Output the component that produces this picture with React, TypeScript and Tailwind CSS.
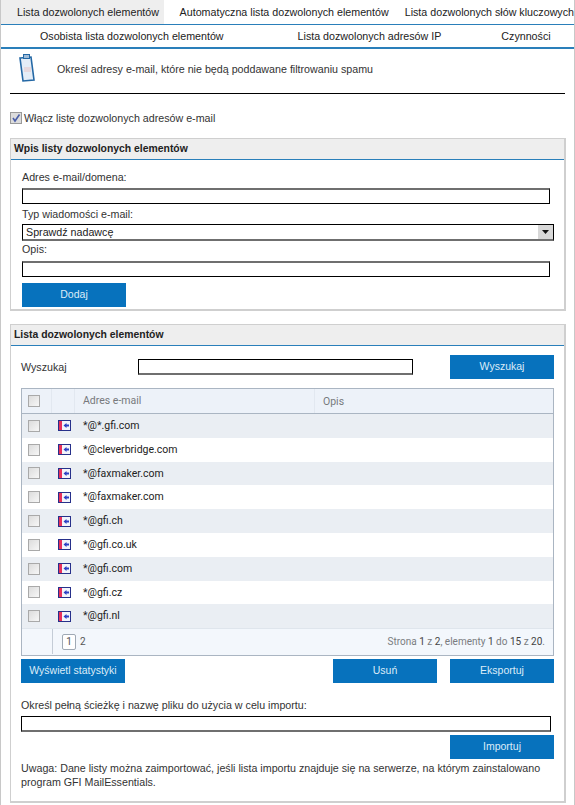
const rows = [
  "*@*.gfi.com",
  "*@cleverbridge.com",
  "*@faxmaker.com",
  "*@faxmaker.com",
  "*@gfi.ch",
  "*@gfi.co.uk",
  "*@gfi.com",
  "*@gfi.cz",
  "*@gfi.nl",
];

function Box() {
  return <span className="block h-[12px] w-[12px] border border-[#a9a9a9] bg-gradient-to-br from-[#dcdcdc] to-[#f7f7f7]" />;
}

function RowIcon() {
  return (
    <svg width="13" height="11" viewBox="0 0 13 11">
      <rect x="0" y="0" width="13" height="11" fill="#27308a" />
      <rect x="1" y="1" width="3" height="9" fill="#e8305c" />
      <rect x="4" y="1" width="8" height="9" fill="#f2f4fb" />
      <path d="M5.5 5.5 L8.5 3 V4.5 H11 V6.5 H8.5 V8 Z" fill="#2b3fc4" />
    </svg>
  );
}

function BlueButton({ label, width }: { label: string; width: string }) {
  return (
    <button className={`h-[24px] ${width} bg-[#0772bd] text-center text-[10.5px] text-[#dcecf8]`}>
      {label}
    </button>
  );
}

function TextBox({ width }: { width: string }) {
  return <div className={`h-[16px] ${width} border border-black border-t-[#6f6f6f] border-t-2 bg-white`} />;
}

function PanelHeader({ title }: { title: string }) {
  return (
    <div className="flex h-[21px] items-center border-b border-[#2a7fba] bg-[#eeeeee] pl-[3px] text-[10.4px] font-bold text-[#222]">
      {title}
    </div>
  );
}

export default function App() {
  return (
    <div className="h-[805px] w-[575px] overflow-hidden border-x border-[#c8c8c8] bg-white font-['Liberation_Sans',Arial,sans-serif] text-[10.7px] text-[#333]">
      {/* Tabs */}
      <div className="flex h-[25px] items-center border-b border-[#2a7fba] text-[#222]">
        <div className="flex h-full w-[163px] items-center whitespace-nowrap bg-[#eeeeee] pl-[16px] pt-[1px]">Lista dozwolonych elementów</div>
        <div className="ml-[16px] whitespace-nowrap pt-[1px]">Automatyczna lista dozwolonych elementów</div>
        <div className="ml-[16px] whitespace-nowrap pt-[1px]">Lista dozwolonych słów kluczowych</div>
      </div>
      <div className="flex h-[24px] items-center border-b-2 border-[#2a7fba] text-[#222]">
        <div className="ml-[39px] whitespace-nowrap">Osobista lista dozwolonych elementów</div>
        <div className="ml-[74px] whitespace-nowrap">Lista dozwolonych adresów IP</div>
        <div className="ml-[60px] whitespace-nowrap">Czynności</div>
      </div>

      {/* Description */}
      <div className="ml-[9px] mr-[9px] flex h-[45px] items-center border-b border-black">
        <svg width="16" height="28" viewBox="0 0 16 28" className="ml-[9px] mt-[-7px]">
          <path d="M1 4 L12 3 L15 26 L4 27 Z" fill="#e4edf7" stroke="#2468a5" strokeWidth="1.6" />
          <rect x="4.5" y="0.5" width="6" height="4" fill="#9fbcd8" stroke="#2468a5" />
          <rect x="5" y="13" width="7" height="5" fill="#e6d9de" />
        </svg>
        <span className="ml-[22px] mt-[-4px] whitespace-nowrap text-[#333]">Określ adresy e-mail, które nie będą poddawane filtrowaniu spamu</span>
      </div>

      {/* Enable */}
      <div className="ml-[9px] mt-[17px] flex h-[14px] items-center">
        <span className="flex h-[12px] w-[12px] items-center justify-center border border-[#9a9a9a] bg-[#dcdcdc]">
          <svg width="10" height="10" viewBox="0 0 10 10">
            <path d="M2 5 L4 8 L8.5 1.5" fill="none" stroke="#4a5ea8" strokeWidth="1.6" />
          </svg>
        </span>
        <span className="ml-[2px]">Włącz listę dozwolonych adresów e-mail</span>
      </div>

      {/* Entry panel */}
      <div className="ml-[9px] mt-[13px] h-[173px] w-[556px] border border-[#cfcfcf] border-b-2 border-r-2 bg-white">
        <PanelHeader title="Wpis listy dozwolonych elementów" />
        <div className="pl-[11px]">
          <div className="mt-[10px] leading-[14px]">Adres e-mail/domena:</div>
          <div className="mt-[4px]"><TextBox width="w-[528px]" /></div>
          <div className="mt-[3px] leading-[14px]">Typ wiadomości e-mail:</div>
          <div className="mt-[3px] flex h-[17px] w-[532px] items-center border border-black border-b-[#6f6f6f] border-b-2 bg-white pl-[3px] text-[#222]">
            Sprawdź nadawcę
            <span className="ml-auto flex h-full w-[15px] items-center justify-center bg-[#d8d8d8]">
              <svg width="7" height="4" viewBox="0 0 7 4"><path d="M0 0 H7 L3.5 4 Z" fill="#111" /></svg>
            </span>
          </div>
          <div className="mt-[1px] leading-[14px]">Opis:</div>
          <div className="mt-[5px]"><TextBox width="w-[528px]" /></div>
          <div className="mt-[6px]"><BlueButton label="Dodaj" width="w-[104px]" /></div>
        </div>
      </div>

      {/* List panel */}
      <div className="ml-[9px] mt-[13px] h-[479px] w-[556px] border border-[#cfcfcf] border-b-2 border-r-2 bg-white">
        <PanelHeader title="Lista dozwolonych elementów" />
        <div className="mt-[9px] flex h-[24px] items-center pl-[10px] pr-[10px]">
          <span className="w-[117px]">Wyszukaj</span>
          <div className="h-[16px] w-[275px] border border-black border-b-[#6f6f6f] border-b-2 bg-white" />
          <div className="ml-auto"><BlueButton label="Wyszukaj" width="w-[104px]" /></div>
        </div>

        <div className="ml-[10px] mt-[9px] w-[533px] border border-[#aab5c2] font-['Roboto',sans-serif] text-[10.5px]">
          <div className="flex h-[25px] items-center border-b border-[#aab5c2] bg-[#edf2f9] text-[#77797c]">
            <div className="flex h-full w-[30px] items-center border-r border-[#e2e8f0] pl-[6px]"><Box /></div>
            <div className="h-full w-[23px] border-r border-[#e2e8f0]" />
            <div className="w-[239px] pl-[8px]">Adres e-mail</div>
            <div className="h-full border-l border-[#e2e8f0] pl-[8px] leading-[25px]">Opis</div>
          </div>
          {rows.map((r, i) => (
            <div key={i} className={`flex h-[23.8px] items-center text-[#222] ${i % 2 === 0 ? "bg-[#eaeef3]" : "bg-white"}`}>
              <div className="flex w-[30px] pl-[6px]"><Box /></div>
              <div className="flex w-[23px] justify-center pl-[2px]"><RowIcon /></div>
              <div className="pl-[8px]">{r}</div>
            </div>
          ))}
          <div className="flex h-[27px] items-center border-t border-[#dfe5ec] bg-[#f3f7fc] pb-[1px] text-[10px] text-[#555]">
            <div className="h-full w-[31px] border-r border-[#c4ccd6]" />
            <div className="ml-[9px] flex h-[16px] w-[14px] items-center justify-center rounded-[2px] border border-[#9fa9b5] bg-white">1</div>
            <span className="ml-[4px]">2</span>
            <span className="ml-auto mr-[8px] text-[#7a7c80]">
              Strona <b className="font-normal text-[#444]">1</b> z <b className="font-normal text-[#444]">2</b>, elementy <b className="font-normal text-[#444]">1</b> do <b className="font-normal text-[#444]">15</b> z <b className="font-normal text-[#444]">20</b>.
            </span>
          </div>
        </div>

        <div className="mt-[3px] flex pl-[10px] pr-[10px]">
          <BlueButton label="Wyświetl statystyki" width="w-[104px]" />
          <div className="ml-auto flex gap-[13px]">
            <BlueButton label="Usuń" width="w-[104px]" />
            <BlueButton label="Eksportuj" width="w-[104px]" />
          </div>
        </div>

        <div className="mt-[15px] pl-[10px] leading-[14px]">Określ pełną ścieżkę i nazwę pliku do użycia w celu importu:</div>
        <div className="ml-[10px] mt-[4px] h-[16px] w-[530px] border border-black border-b-[#6f6f6f] border-b-2 bg-white" />
        <div className="mt-[3px] flex justify-end pr-[10px]"><BlueButton label="Importuj" width="w-[104px]" /></div>
        <div className="mt-[2px] pl-[10px] pr-[10px] leading-[14px]">
          Uwaga: Dane listy można zaimportować, jeśli lista importu znajduje się na serwerze, na którym zainstalowano program GFI MailEssentials.
        </div>
      </div>
    </div>
  );
}
